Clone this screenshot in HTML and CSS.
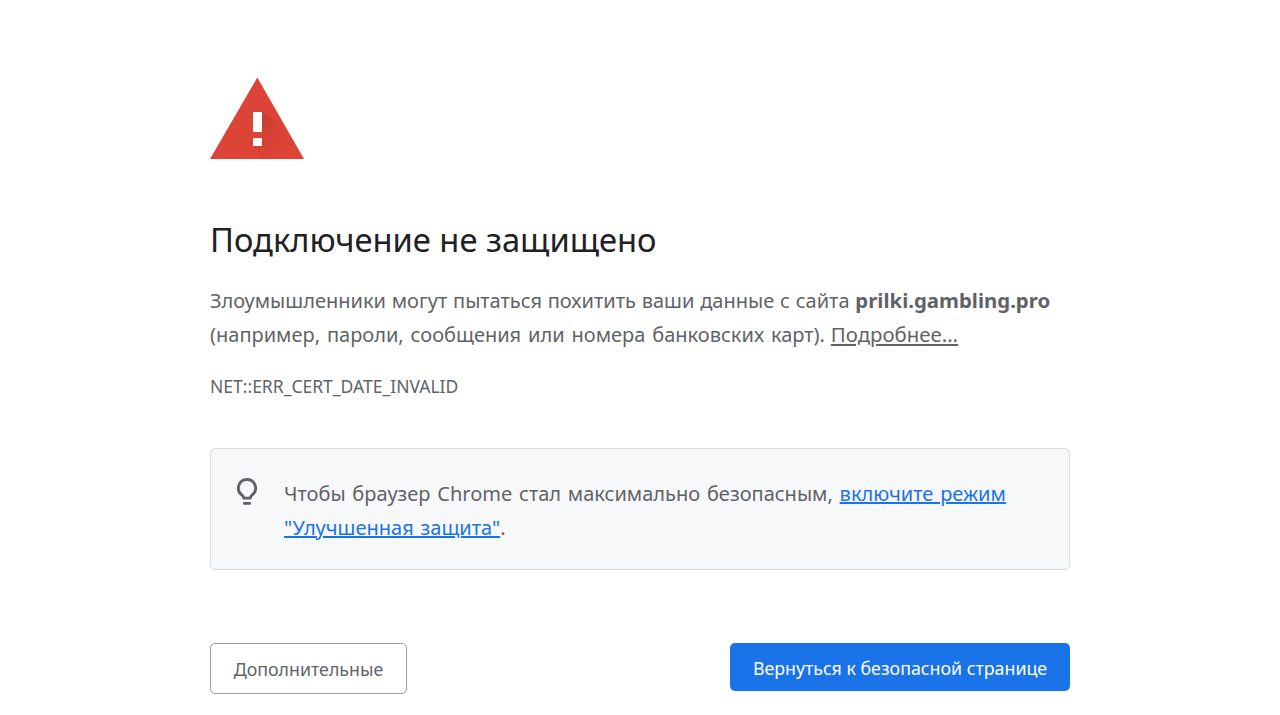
FILE: index.html
```html
<!DOCTYPE html>
<html lang="ru">
<head>
<meta charset="utf-8">
<title>Ошибка конфиденциальности</title>
<link rel="stylesheet" href="styles.css">
</head>
<body>
<main class="page">
  <svg class="warn" viewBox="0 0 95 84" width="95" height="84" aria-hidden="true">
    <defs>
      <linearGradient id="shade" x1="0.1" y1="0.05" x2="0.85" y2="0.9">
        <stop offset="0" stop-color="#b5342a" stop-opacity="0.5"/>
        <stop offset="0.7" stop-color="#b5342a" stop-opacity="0"/>
      </linearGradient>
    </defs>
    <polygon points="47.3,0.5 94,82 0,82" fill="#db4437"/>
    <polygon points="52,35 52,69 43,69 56,82 90,82 66,44" fill="url(#shade)"/>
    <rect x="43" y="35" width="9" height="20" fill="#fff"/>
    <rect x="43" y="61" width="9" height="8" fill="#fff"/>
  </svg>
  <h1 class="title">Подключение не защищено</h1>
  <p class="para">Злоумышленники могут пытаться похитить ваши данные с сайта <strong>prilki.gambling.pro</strong> <span class="note">(например, пароли, сообщения или номера банковских карт).</span> <a class="more" href="#">Подробнее...</a></p>
  <p class="code">NET::ERR_CERT_DATE_INVALID</p>
  <section class="tip">
    <svg class="bulb" viewBox="0 0 24 32" width="24" height="32" aria-hidden="true">
      <path d="M12 2.5a8.6 8.6 0 0 0-5 15.6c1 .8 1.6 1.6 1.8 3.1h6.4c.2-1.5.8-2.3 1.8-3.1a8.6 8.6 0 0 0-5-15.6z" fill="none" stroke="#5f6368" stroke-width="2.8" stroke-linejoin="round"/>
      <rect x="8" y="25" width="8" height="2.8" rx="1" fill="#5f6368"/>
    </svg>
    <p class="tip-text">Чтобы браузер Chrome стал максимально безопасным, <a class="link" href="#">включите режим</a> <a class="link" href="#">"Улучшенная защита"</a>.</p>
  </section>
  <div class="actions">
    <button class="btn btn-secondary" type="button">Дополнительные</button>
    <button class="btn btn-primary" type="button">Вернуться к безопасной странице</button>
  </div>
</main>
</body>
</html>
```

FILE: styles.css
```css
* { box-sizing: border-box; }
html, body { margin: 0; height: 100%; background: #fff; overflow: hidden; }
body { font-family: "Noto Sans", "Open Sans", sans-serif; color: #5f6368; }
.page { width: 860px; margin: 0 auto; padding-top: 77px; display: flex; flex-direction: column; }
.warn { display: block; }
.title { margin: 56px 0 0; font-size: 32.7px; line-height: 46px; font-weight: 400; color: #202124; }
.para { margin: 21px 0 0; font-size: 20px; line-height: 34px; word-spacing: 0.6px; }
.para strong { font-weight: 700; font-size: 20.4px; line-height: 0; word-spacing: 0; }
.note { word-spacing: 1.7px; }
.more { color: #5f6368; text-decoration: underline; font-size: 20.4px; line-height: 0; }
.code { margin: 21px 0 0; font-size: 17.5px; line-height: 26px; }
.tip { margin-top: 49px; height: 122px; display: flex; gap: 25px; padding: 28px 24px; background: #f7f8fa; border: 1px solid #dadce0; border-radius: 5px; }
.bulb { flex: none; margin-top: 0; }
.tip-text { margin: 0; font-size: 20px; line-height: 34px; word-spacing: 1.6px; }
.link { color: #1a73e8; text-decoration: underline; }
.actions { margin-top: 73px; display: flex; justify-content: space-between; align-items: flex-start; }
.btn { font-family: inherit; font-size: 17.8px; border-radius: 5px; cursor: pointer; }
.btn-secondary { width: 197px; height: 51px; background: #fff; color: #5f6368; border: 1px solid #9aa0a6; }
.btn-primary { width: 340px; height: 48px; padding-top: 2px; background: #1a73e8; color: #fff; border: none; }
```
